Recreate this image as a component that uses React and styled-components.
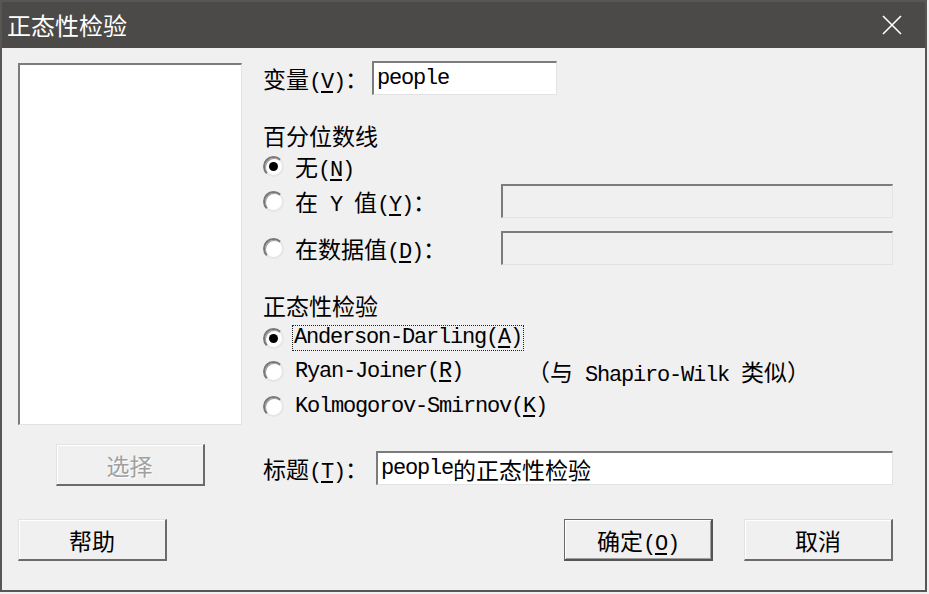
import styled, { createGlobalStyle } from "styled-components";

const GlobalStyle = createGlobalStyle`
  body {
    margin: 0;
    background: #f0f0f0;
    font-family: "Liberation Mono", "Noto Sans CJK SC", monospace;
  }
`;

const CJK = /([\u3000-\u303f\u4e00-\u9fff\uff00-\uffef]+)/;

function Txt({ s }) {
  return s
    .split(CJK)
    .filter(Boolean)
    .map((part, i) =>
      CJK.test(part) ? <Han key={i}>{part}</Han> : <span key={i}>{part}</span>
    );
}

// "变量(&V)：" -> mnemonic letter underlined, like a Windows label
function Mn({ text }) {
  const [a, b] = text.split("&");
  if (b === undefined) return <Txt s={a} />;
  return (
    <>
      <Txt s={a} />
      <Key>{b[0]}</Key>
      <Txt s={b.slice(1)} />
    </>
  );
}

function CloseIcon() {
  return (
    <svg width="20" height="20" viewBox="0 0 20 20">
      <path d="M1 1 L19 19 M19 1 L1 19" stroke="#fff" strokeWidth="1.6" fill="none" />
    </svg>
  );
}

export default function App() {
  return (
    <>
      <GlobalStyle />
      <Window>
        <TitleBar>
          <Caption>正态性检验</Caption>
          <CloseIcon />
        </TitleBar>
        <Body>
          <Main>
            <LeftCol>
              <ListBox />
              <Button disabled>
                <Mn text="选择" />
              </Button>
            </LeftCol>
            <RightCol>
              <Row $h={34}>
                <Label $w={109}>
                  <Mn text="变量(&V)：" />
                </Label>
                <Field $w={185}>people</Field>
              </Row>
              <Row $mt={26}>
                <Mn text="百分位数线" />
              </Row>
              <Row $mt={3}>
                <Radio $on />
                <OptionText>
                  <Mn text="无(&N)" />
                </OptionText>
              </Row>
              <Row $h={34} $mt={4}>
                <Option $w={238}>
                  <Radio />
                  <OptionText>
                    <Mn text="在 Y 值(&Y)：" />
                  </OptionText>
                </Option>
                <Field $disabled />
              </Row>
              <Row $h={34} $mt={13}>
                <Option $w={238}>
                  <Radio />
                  <OptionText>
                    <Mn text="在数据值(&D)：" />
                  </OptionText>
                </Option>
                <Field $disabled />
              </Row>
              <Row $mt={26}>
                <Mn text="正态性检验" />
              </Row>
              <Row $mt={5}>
                <Radio $on />
                <FocusText>
                  <Mn text="Anderson-Darling(&A)" />
                </FocusText>
              </Row>
              <Row $mt={5}>
                <Radio />
                <OptionText>
                  <Mn text="Ryan-Joiner(&R)" />
                </OptionText>
                <Note>
                  <Txt s="（与 Shapiro-Wilk 类似）" />
                </Note>
              </Row>
              <Row $mt={7}>
                <Radio />
                <OptionText>
                  <Mn text="Kolmogorov-Smirnov(&K)" />
                </OptionText>
              </Row>
              <Row $h={34} $mt={31}>
                <Label $w={113}>
                  <Mn text="标题(&T)：" />
                </Label>
                <Field>
                  <Txt s="people的正态性检验" />
                </Field>
              </Row>
            </RightCol>
          </Main>
          <Footer>
            <Button>
              <Mn text="帮助" />
            </Button>
            <ButtonGroup>
              <Button $default>
                <Mn text="确定(&O)" />
              </Button>
              <Button>
                <Mn text="取消" />
              </Button>
            </ButtonGroup>
          </Footer>
        </Body>
      </Window>
    </>
  );
}

const Window = styled.div`
  width: 927px;
  height: 592px;
  box-sizing: border-box;
  border: 2px solid #575655;
  display: flex;
  flex-direction: column;
  background: #f0f0f0;
`;

const TitleBar = styled.div`
  height: 46px;
  flex: none;
  background: #4b4a48;
  display: flex;
  align-items: center;
  justify-content: space-between;
  padding: 0 23px 0 5px;
`;

const Caption = styled.div`
  font-family: "Noto Sans CJK SC", sans-serif;
  font-size: 24px;
  color: #fff;
  line-height: 30px;
`;

const Body = styled.div`
  flex: 1;
  box-sizing: border-box;
  padding: 13px 32px 0 16px;
  font-size: 22px;
  letter-spacing: -1.2px;
  color: #000;
`;

const Main = styled.div`
  display: grid;
  grid-template-columns: 224px 1fr;
  column-gap: 21px;
`;

const LeftCol = styled.div`
  display: flex;
  flex-direction: column;
  align-items: center;
  padding-top: 2px;
  gap: 19px;
`;

const ListBox = styled.div`
  width: 224px;
  height: 362px;
  box-sizing: border-box;
  background: #fff;
  border-style: solid;
  border-width: 2px 1px 1px 2px;
  border-color: #7c7c7c #e3e3e3 #e3e3e3 #7c7c7c;
`;

const RightCol = styled.div`
  display: flex;
  flex-direction: column;
`;

const Row = styled.div`
  display: flex;
  align-items: center;
  height: ${(p) => p.$h || 28}px;
  margin-top: ${(p) => p.$mt || 0}px;
  white-space: pre;
`;

const Label = styled.div`
  width: ${(p) => p.$w}px;
  flex: none;
`;

const Option = styled.div`
  display: flex;
  align-items: center;
  width: ${(p) => p.$w}px;
  flex: none;
`;

const Han = styled.span`
  font-family: "Noto Sans CJK SC", sans-serif;
  font-size: 23px;
  letter-spacing: 0;
`;

const Key = styled.u`
  text-underline-offset: 3px;
`;

const Field = styled.div`
  height: 34px;
  box-sizing: border-box;
  width: ${(p) => (p.$w ? `${p.$w}px` : "auto")};
  flex: ${(p) => (p.$w ? "none" : "1")};
  display: flex;
  align-items: center;
  padding-left: 3px;
  background: ${(p) => (p.$disabled ? "#f0f0f0" : "#fff")};
  border-style: solid;
  border-width: 2px 1px 1px 2px;
  border-color: #7c7c7c #e3e3e3 #e3e3e3 #7c7c7c;
`;

const Radio = styled.span`
  width: 21px;
  height: 21px;
  flex: none;
  box-sizing: border-box;
  border-radius: 50%;
  border: 2px solid;
  border-color: #777 #e6e6e6 #e6e6e6 #777;
  background: #fff;
  box-shadow: inset 1px 1px 0 #a0a0a0;
  display: inline-flex;
  align-items: center;
  justify-content: center;

  &::after {
    content: "";
    width: 9px;
    height: 9px;
    border-radius: 50%;
    background: ${(p) => (p.$on ? "#000" : "transparent")};
  }
`;

const OptionText = styled.span`
  margin-left: 11px;
`;

const FocusText = styled.span`
  margin-left: 8px;
  padding: 0 1px;
  line-height: 24px;
  border: 1px dotted #222;
`;

const Note = styled.span`
  margin-left: 64px;
`;

const Button = styled.button`
  width: 149px;
  height: 42px;
  box-sizing: border-box;
  padding: 0;
  background: #f0f0f0;
  font-family: "Liberation Mono", "Noto Sans CJK SC", monospace;
  font-size: 22px;
  letter-spacing: -1.2px;
  color: ${(p) => (p.disabled ? "#a0a0a0" : "#000")};
  text-shadow: ${(p) => (p.disabled ? "1px 1px 0 #fff" : "none")};
  white-space: pre;
  border-style: solid;
  border-width: 1px 2px 2px 1px;
  border-color: ${(p) =>
    p.$default
      ? "#6a6a6a #555 #555 #6a6a6a"
      : "#e3e3e3 #6b6b6b #6b6b6b #e3e3e3"};
  box-shadow: ${(p) =>
    p.$default ? "inset 1px 1px 0 #fff, inset -1px -1px 0 #a0a0a0" : "inset 1px 1px 0 #fff"};
`;

const Footer = styled.div`
  display: flex;
  justify-content: space-between;
  margin-top: 33px;
`;

const ButtonGroup = styled.div`
  display: flex;
  gap: 31px;
`;
